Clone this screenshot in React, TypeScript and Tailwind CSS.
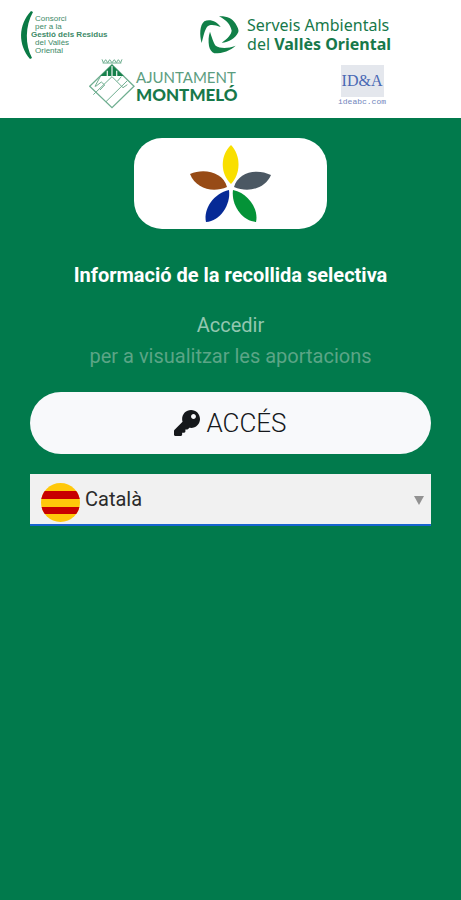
import { FaKey } from "react-icons/fa";

function ConsorciLogo() {
  return (
    <div className="flex items-center text-[#3d8a68]">
      <svg width="10" height="48" viewBox="0 0 10 48" className="overflow-visible" aria-hidden="true">
        <path d="M10 0C-3 14-3 34 9 48L11 47C4 34 4 15 12 1Z" fill="#0a7a45" />
      </svg>
      <div className="font-['Liberation_Sans',sans-serif] text-[8px] leading-[8px] whitespace-nowrap">
        <p className="pl-1">Consorci</p>
        <p className="pl-1">per a la</p>
        <p className="font-bold">Gestió dels Residus</p>
        <p className="pl-1">del Vallès</p>
        <p className="pl-1">Oriental</p>
      </div>
    </div>
  );
}

function ServeisLogo() {
  return (
    <div className="flex items-center gap-2 text-[#17784a]">
      <svg width="40" height="40" viewBox="12 15 120 120" fill="#118048" aria-hidden="true">
        <path d="M20 99C13 76 14 45 28 34C44 26 66 34 77 51C60 44 46 42 38 49C29 58 26 78 20 99Z" />
        <path d="M72 19C96 18 112 26 121 40C128 52 132 60 130 66C122 84 102 98 80 98C100 84 108 74 110 62C106 44 96 32 72 19Z" />
        <path d="M45 65C50 80 55 98 62 107C76 116 98 116 122 107C106 122 84 130 58 130C50 126 44 119 42 108C40 94 40 78 45 65Z" />
      </svg>
      <div className="font-['Noto_Sans',sans-serif] text-base leading-[19px] whitespace-nowrap">
        <p>Serveis Ambientals</p>
        <p>
          del <strong>Vallès Oriental</strong>
        </p>
      </div>
    </div>
  );
}

function MontmeloLogo() {
  return (
    <div className="flex items-center gap-px text-[#17784a]">
      <svg width="46" height="50" viewBox="15 15 138 150" fill="none" stroke="#6fae90" strokeWidth="4" aria-hidden="true">
        <path d="M56 27H112M54 16L58 26L65 17L71 26L77 17L84 26L91 17L97 26L103 17L110 26L114 16" strokeWidth="3" />
        <path d="M84 32L150 97L84 161L17 97Z" />
        <path d="M84 68L28 122M50 66L33 97M34 98L52 84L62 93L48 108M66 143L130 80M84 68L118 102M112 68L100 82M117 101L130 92" strokeWidth="3" />
        <path d="M84 32L119 66H49Z" fill="#16804b" stroke="none" />
        <path d="M70 50V66M84 36V66M98 50V66" stroke="#d9ebe1" />
      </svg>
      <div className="pt-1 font-['Lato',sans-serif] leading-[17px] whitespace-nowrap">
        <p className="text-[15px] text-[#5c9d80]">AJUNTAMENT</p>
        <p className="text-[17px] font-black">MONTMELÓ</p>
      </div>
    </div>
  );
}

function IdaLogo() {
  return (
    <div className="flex w-[46px] flex-col items-center pt-1 text-[#4a69b4]">
      <div className="flex h-8 w-[43px] items-center justify-center bg-[#e4e7ed] font-['Liberation_Serif',serif] text-base leading-5">
        ID&amp;A
      </div>
      <p className="font-['Liberation_Mono',monospace] text-[8px] leading-[9px] text-[#7185bd]">ideabc.com</p>
    </div>
  );
}

function Flower() {
  return (
    <svg width="85" height="81" viewBox="188 143 85 81" role="img" aria-label="Recollida selectiva">
      <path d="M231 145C241 155 241 174 231 184C220 174 220 155 231 145Z" fill="#f9df00" />
      <path d="M190 174C204 168 223 172 227 187C213 193 196 189 190 174Z" fill="#974b16" />
      <path d="M271 175C257 168 238 172 234 187C248 193 265 189 271 175Z" fill="#4b5863" />
      <path d="M229 190C214 193 203 209 206 222C220 221 231 205 229 190Z" fill="#062a96" />
      <path d="M233 190C248 193 259 209 256 222C242 221 231 205 233 190Z" fill="#049337" />
    </svg>
  );
}

function Flag() {
  return (
    <svg width="39" height="39" viewBox="0 0 39 39" aria-hidden="true">
      <clipPath id="round">
        <circle cx="19.5" cy="19.5" r="19.5" />
      </clipPath>
      <g clipPath="url(#round)">
        <path d="M0 0H39V39H0Z" fill="#ffc80a" />
        <path d="M0 8H39V16H0ZM0 24H39V31H0Z" fill="#c80000" />
      </g>
    </svg>
  );
}

export default function App() {
  return (
    <div className="flex min-h-screen flex-col bg-[#017a4c] font-['Roboto',sans-serif]">
      <header className="bg-white pt-[11px] pb-[10px]">
        <div className="flex h-12 items-center justify-between pr-[70px] pl-[21px]">
          <ConsorciLogo />
          <ServeisLogo />
        </div>
        <div className="flex h-[49px] items-center justify-between pr-[76px] pl-[89px]">
          <MontmeloLogo />
          <IdaLogo />
        </div>
      </header>
      <main className="flex flex-col px-[30px] pt-5 text-center">
        <div className="flex h-[91px] w-[193px] items-center justify-center self-center rounded-[28px] bg-white">
          <Flower />
        </div>
        <h1 className="mt-8 text-xl leading-7 font-bold text-white">Informació de la recollida selectiva</h1>
        <div className="mt-[21px] text-xl leading-[31px]">
          <p className="text-[#93c7b0]">Accedir</p>
          <p className="text-[#5ba586]">per a visualitzar les aportacions</p>
        </div>
        <button
          type="button"
          className="mt-5 flex h-[62px] items-center justify-center gap-[6px] rounded-full bg-[#f8f9fb] text-[26px] font-light text-[#15181b]"
        >
          <FaKey aria-hidden="true" />
          ACCÉS
        </button>
        <div className="relative mt-5">
          <select
            aria-label="Idioma"
            className="block h-[52px] w-full appearance-none rounded-none border-b-2 border-[#1764cf] bg-[#f1f1f1] pr-8 pl-[55px] text-xl text-[#2b2b2b] outline-none"
          >
            <option>Català</option>
          </select>
          <span className="pointer-events-none absolute inset-y-0 left-[11px] flex items-center pt-1">
            <Flag />
          </span>
          <span className="pointer-events-none absolute inset-y-0 right-[7px] flex items-center">
            <svg width="10" height="9" viewBox="0 0 10 9" aria-hidden="true">
              <path d="M0 0H10L5 9Z" fill="#929292" />
            </svg>
          </span>
        </div>
      </main>
    </div>
  );
}
